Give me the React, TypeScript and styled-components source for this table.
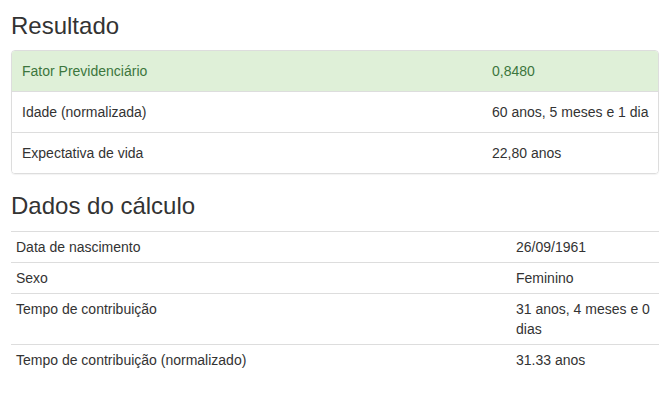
import React from "react";
import styled, { createGlobalStyle } from "styled-components";

const GlobalStyle = createGlobalStyle`
  html, body { margin: 0; padding: 0; background: #fff; }
  body {
    font-family: "Liberation Sans", Arial, Helvetica, sans-serif;
    font-size: 14px;
    line-height: 20px;
    color: #333;
  }
  * { box-sizing: border-box; }
`;

const Page = styled.div`
  display: flex;
  flex-direction: column;
  padding: 13px 5px 0 11px;
`;

const Heading = styled.h3<{ $gap: number }>`
  margin: 0 0 ${(p) => p.$gap}px;
  font-size: 24px;
  line-height: 26px;
  font-weight: 500;
  color: #333;
`;

const ListGroup = styled.div`
  display: flex;
  flex-direction: column;
  border: 1px solid #ddd;
  border-radius: 4px;
  margin-bottom: 19px;
  overflow: hidden;
  box-shadow: 0 1px 1px rgba(0, 0, 0, 0.05);
`;

const ListItem = styled.div<{ $success?: boolean }>`
  display: grid;
  grid-template-columns: 470px 1fr;
  padding: 10px 4px 10px 10px;
  background: ${(p) => (p.$success ? "#dff0d8" : "#fff")};
  color: ${(p) => (p.$success ? "#3c763d" : "#333")};
  & + & {
    border-top: 1px solid #ddd;
  }
`;

const ItemValue = styled.span`
  white-space: nowrap;
`;

const Table = styled.div`
  display: flex;
  flex-direction: column;
`;

const TableRow = styled.div`
  display: grid;
  grid-template-columns: 500px 1fr;
  border-top: 1px solid #ddd;
`;

const Cell = styled.div`
  padding: 5px;
`;

const resultado = [
  { label: "Fator Previdenciário", value: "0,8480", success: true },
  { label: "Idade (normalizada)", value: "60 anos, 5 meses e 1 dia" },
  { label: "Expectativa de vida", value: "22,80 anos" },
];

const dados = [
  { label: "Data de nascimento", value: "26/09/1961" },
  { label: "Sexo", value: "Feminino" },
  { label: "Tempo de contribuição", value: "31 anos, 4 meses e 0 dias" },
  { label: "Tempo de contribuição (normalizado)", value: "31.33 anos" },
];

export default function App() {
  return (
    <>
      <GlobalStyle />
      <Page>
        <Heading $gap={11}>Resultado</Heading>
        <ListGroup>
          {resultado.map((r) => (
            <ListItem key={r.label} $success={r.success}>
              <span>{r.label}</span>
              <ItemValue>{r.value}</ItemValue>
            </ListItem>
          ))}
        </ListGroup>
        <Heading $gap={12}>Dados do cálculo</Heading>
        <Table>
          {dados.map((d) => (
            <TableRow key={d.label}>
              <Cell>{d.label}</Cell>
              <Cell>{d.value}</Cell>
            </TableRow>
          ))}
        </Table>
      </Page>
    </>
  );
}
